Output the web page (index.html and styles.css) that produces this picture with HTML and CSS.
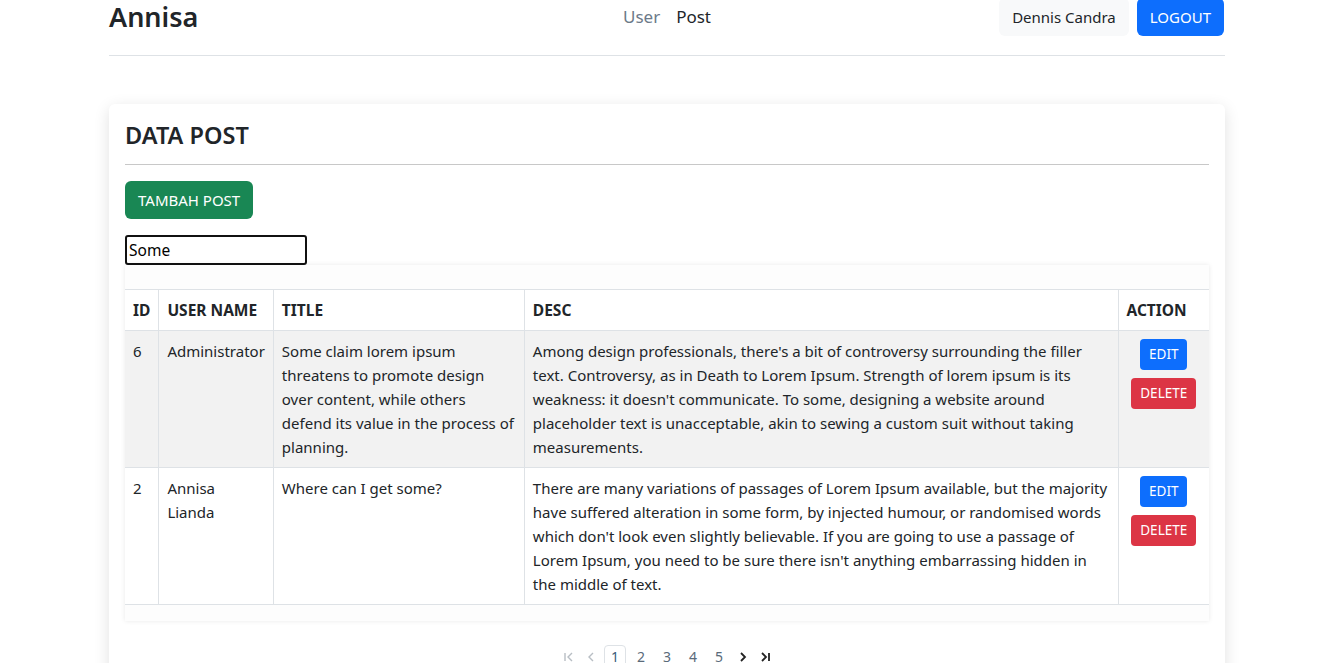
FILE: index.html
```html
<!DOCTYPE html>
<html lang="id">
<head>
<meta charset="utf-8">
<title>Annisa - Data Post</title>
<link rel="stylesheet" href="styles.css">
</head>
<body>
<div class="container">
  <header class="topbar">
    <div class="brand">Annisa</div>
    <nav class="nav">
      <a class="nav-link muted" href="#">User</a>
      <a class="nav-link" href="#">Post</a>
    </nav>
    <div class="user-area">
      <button class="btn btn-light">Dennis Candra</button>
      <button class="btn btn-primary">LOGOUT</button>
    </div>
  </header>

  <section class="card">
    <h4 class="card-title">DATA POST</h4>
    <hr class="divider">
    <button class="btn btn-success">TAMBAH POST</button>
    <div class="search-row"><input class="search" type="text" value="Some"></div>
    <div class="table-wrap">
      <table class="table">
        <thead>
          <tr>
            <th class="c-id">ID</th>
            <th class="c-user">USER NAME</th>
            <th class="c-title">TITLE</th>
            <th class="c-desc">DESC</th>
            <th class="c-action">ACTION</th>
          </tr>
        </thead>
        <tbody>
          <tr class="striped">
            <td>6</td>
            <td>Administrator</td>
            <td>Some claim lorem ipsum threatens to promote design over content, while others defend its value in the process of planning.</td>
            <td>Among design professionals, there's a bit of controversy surrounding the filler text. Controversy, as in Death to Lorem Ipsum. Strength of lorem ipsum is its weakness: it doesn't communicate. To some, designing a website around placeholder text is unacceptable, akin to sewing a custom suit without taking measurements.</td>
            <td class="actions">
              <button class="btn btn-sm btn-primary">EDIT</button>
              <button class="btn btn-sm btn-danger">DELETE</button>
            </td>
          </tr>
          <tr>
            <td>2</td>
            <td>Annisa Lianda</td>
            <td>Where can I get some?</td>
            <td>There are many variations of passages of Lorem Ipsum available, but the majority have suffered alteration in some form, by injected humour, or randomised words which don't look even slightly believable. If you are going to use a passage of Lorem Ipsum, you need to be sure there isn't anything embarrassing hidden in the middle of text.</td>
            <td class="actions">
              <button class="btn btn-sm btn-primary">EDIT</button>
              <button class="btn btn-sm btn-danger">DELETE</button>
            </td>
          </tr>
        </tbody>
      </table>
    </div>
    <ul class="pagination">
      <li class="pg arrow disabled"><svg width="12" height="12" viewBox="0 0 12 12"><path d="M2 2v8M9 2L5 6l4 4" fill="none" stroke="currentColor" stroke-width="1.4"/></svg></li>
      <li class="pg arrow disabled"><svg width="12" height="12" viewBox="0 0 12 12"><path d="M8 2L4 6l4 4" fill="none" stroke="currentColor" stroke-width="1.4"/></svg></li>
      <li class="pg active">1</li>
      <li class="pg">2</li>
      <li class="pg">3</li>
      <li class="pg">4</li>
      <li class="pg">5</li>
      <li class="pg arrow dark"><svg width="12" height="12" viewBox="0 0 12 12"><path d="M4 2l4 4-4 4" fill="none" stroke="currentColor" stroke-width="1.8"/></svg></li>
      <li class="pg arrow dark"><svg width="12" height="12" viewBox="0 0 12 12"><path d="M3 2l4 4-4 4M10 2v8" fill="none" stroke="currentColor" stroke-width="1.8"/></svg></li>
    </ul>
  </section>
</div>
</body>
</html>
```
FILE: styles.css
```css
* { box-sizing: border-box; }
html, body { margin: 0; padding: 0; background: #fff; }
body {
  font-family: "Segoe UI", "Noto Sans", "Open Sans", sans-serif;
  font-size: 15px;
  line-height: 24px;
  color: #212529;
  overflow: hidden;
}
.container {
  width: 1116px;
  margin: 0 auto;
  position: relative;
  left: -1px;
}
.topbar {
  display: flex;
  align-items: center;
  justify-content: space-between;
  margin-top: -18px;
  padding: 16px 0 19px;
  border-bottom: 1px solid #dee2e6;
  margin-bottom: 48px;
}
.brand {
  font-size: 27px;
  font-weight: 600;
  line-height: 34px;
  width: 400px;
}
.nav { display: flex; }
.nav-link {
  text-decoration: none;
  color: #212529;
  font-size: 17px;
  padding: 0 8px;
}
.nav-link.muted { color: #6c7a89; }
.user-area {
  width: 400px;
  display: flex;
  justify-content: flex-end;
  gap: 8px;
  padding-right: 1px;
}
.btn {
  font-family: inherit;
  font-size: 15px;
  line-height: 24px;
  padding: 6px 12px;
  border: 1px solid transparent;
  border-radius: 6px;
  cursor: pointer;
}
.btn-light { background: #f8f9fa; color: #212529; }
.btn-primary { background: #0d6efd; color: #fff; }
.btn-success { background: #198754; color: #fff; }
.btn-danger { background: #dc3545; color: #fff; }
.btn-sm {
  font-size: 13.5px;
  line-height: 21px;
  padding: 4px 8px;
  border-radius: 4px;
  display: block;
  margin: 0 auto 8px;
}
.card {
  background: #fff;
  border-radius: 6px;
  box-shadow: 0 4px 16px rgba(0,0,0,.12);
  padding: 16px 16px 0;
  height: 600px;
}
.card-title {
  margin: 0 0 14px;
  font-size: 23.5px;
  font-weight: 600;
  line-height: 30px;
}
.divider {
  margin: 0 0 16px;
  border: 0;
  border-top: 1px solid #c8c8c8;
}
.search-row { margin-top: 16px; }
.search {
  width: 182px;
  height: 30px;
  border: 2px solid #111;
  border-radius: 3px;
  font-family: inherit;
  font-size: 15.5px;
  padding: 0 2px;
  outline: none;
  display: block;
}
.table-wrap {
  padding: 24px 0 16px;
  box-shadow: 0 0 5px rgba(0,0,0,.09);
  background: #fdfdfd;
}
.table {
  width: 100%;
  border-collapse: collapse;
  background: #fff;
}
.table th, .table td {
  border: 1px solid #dee2e6;
  padding: 8px;
  text-align: left;
  vertical-align: top;
}
.table th { font-weight: 700; font-size: 15.5px; vertical-align: bottom; }
.table tr > :first-child { border-left: 0; }
.table tr > :last-child { border-right: 0; }
.c-id { width: 32px; }
.c-user { width: 113px; }
.c-title { width: 251px; }
.c-action { width: 91px; }
.striped td { background: #f2f2f2; }
.actions { text-align: center; }
.pagination {
  list-style: none;
  margin: 24px 0 0;
  padding: 0;
  display: flex;
  justify-content: center;
  align-items: center;
  font-size: 14px;
  gap: 4px;
}
.pg {
  min-width: 22px;
  height: 24px;
  display: flex;
  align-items: center;
  justify-content: center;
  color: #5a6a7a;
}
.pg.arrow { min-width: 18px; }
.pg.active {
  border: 1px solid #dee2e6;
  border-radius: 4px;
  color: #3b5a7a;
}
.pg.disabled { color: #b8bec4; }
.pg.dark { color: #222; }
```
